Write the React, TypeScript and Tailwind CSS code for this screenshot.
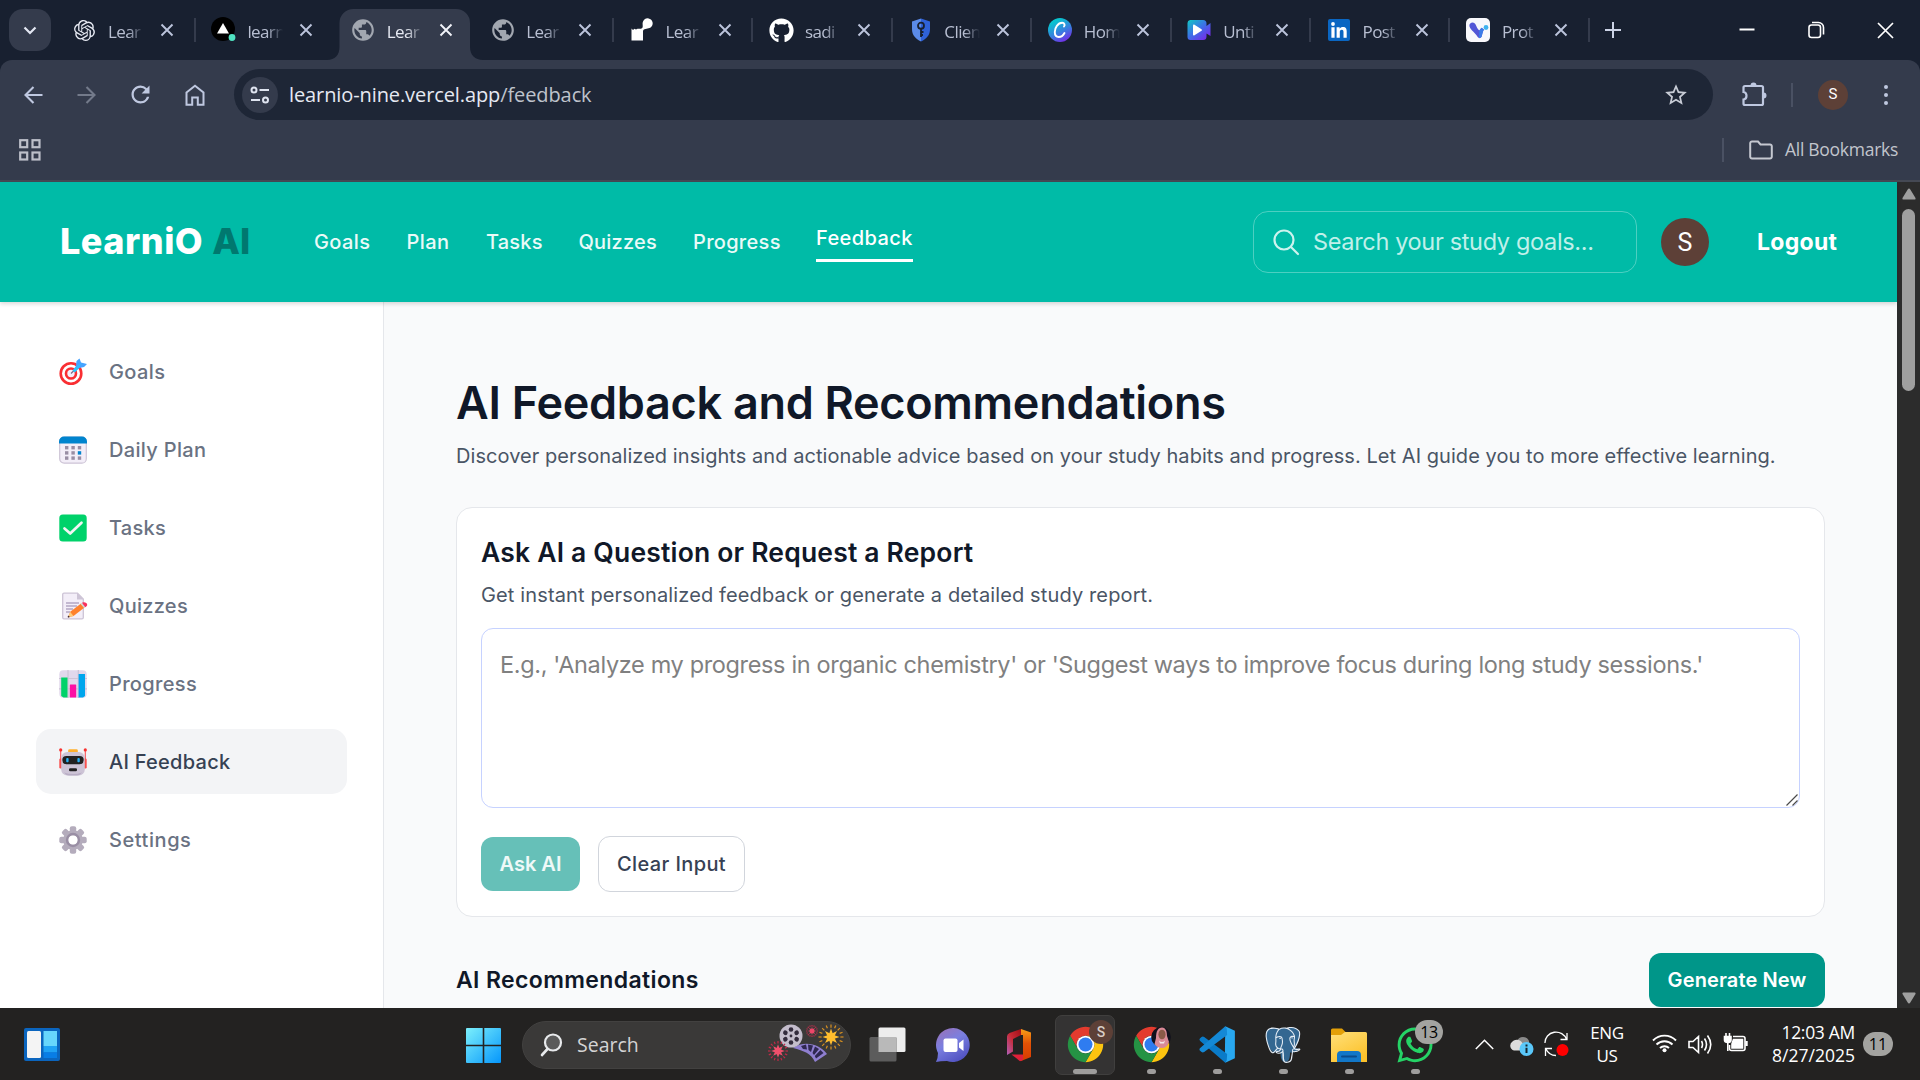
import React from 'react';
import { SiOpenai, SiPostgresql } from 'react-icons/si';
import { FaGithub, FaWhatsapp } from 'react-icons/fa';
import { MdPublic, MdStarBorder, MdRefresh } from 'react-icons/md';

const SYS = "font-['Open_Sans','Noto_Sans',sans-serif]";

/* ---------- Browser tab favicons ---------- */

const VercelIcon = () => (
  <svg width="26" height="26" viewBox="0 0 26 26">
    <circle cx="12" cy="12" r="12" fill="#000" />
    <path d="M12 6 18 16.500H6z" fill="#fff" />
    <circle cx="21" cy="20.500" r="3.400" fill="#50e3c2" />
  </svg>
);
const ResumeIcon = () => (
  <svg width="22" height="24" viewBox="0 0 22 24" fill="#fff">
    <path d="M0.500 10.500 2 12 3.500 10.800 5 11.600 6.500 10.800H10C13 10 11 6 11.800 4.200A5 5 0 1 1 18.500 10C16 11 12.500 10.500 12 13V22.500H0.500z" />
  </svg>
);
const ShieldIcon = () => (
  <svg width="20" height="24" viewBox="0 0 20 24">
    <path d="M10 0.500 19 3.500V11C19 17 15.500 21 10 23.500z" fill="#2f62d9" />
    <path d="M10 0.500 1 3.500V11C1 17 4.500 21 10 23.500z" fill="#5b8be8" />
    <circle cx="10" cy="7.700" r="3" fill="none" stroke="#182030" strokeWidth="1.800" />
    <path d="M10 10.500V19M10 14H12.500M10 17H12" stroke="#182030" strokeWidth="1.800" />
  </svg>
);
const CanvaIcon = () => (
  <svg width="24" height="24" viewBox="0 0 24 24">
    <defs>
      <linearGradient id="cv" x1="0.200" y1="0" x2="0.750" y2="1">
        <stop offset="0.150" stopColor="#08c3cf" />
        <stop offset="0.600" stopColor="#3a7be0" />
        <stop offset="1" stopColor="#7a25e8" />
      </linearGradient>
    </defs>
    <circle cx="12" cy="12" r="12" fill="url(#cv)" />
    <path d="M16 8.500C17.200 7 16.500 4.800 14.200 4.800 9.800 4.800 6.800 10 6.800 14 6.800 17 8.400 19 10.800 19 13.200 19 15.200 17.400 16.500 15" fill="none" stroke="#fff" strokeWidth="1.900" strokeLinecap="round" />
  </svg>
);
const ClipIcon = () => (
  <svg width="25" height="22" viewBox="0 0 25 22">
    <defs>
      <linearGradient id="cl" x1="0" y1="0" x2="0.900" y2="1">
        <stop offset="0" stopColor="#10c8c4" />
        <stop offset="0.500" stopColor="#3d6fe8" />
        <stop offset="1" stopColor="#8020ea" />
      </linearGradient>
    </defs>
    <path d="M3 1H16A3.500 3.500 0 0 1 19.500 4.500V7L23.500 4V17L19.500 14.500V17.500A3.500 3.500 0 0 1 16 21H3.500A3 3 0 0 1 0.500 18V4A3 3 0 0 1 3 1Z" fill="url(#cl)" />
    <path d="M6 6.300C6 5.500 6.800 5.300 7.500 5.700L14.500 10.200C15.200 10.700 15.200 11.300 14.500 11.800L7.500 16.300C6.800 16.700 6 16.500 6 15.700z" fill="#fff" />
  </svg>
);
const LinkedInIcon = () => (
  <svg width="22" height="22" viewBox="0 0 22 22">
    <rect width="22" height="22" rx="2" fill="#0a66c2" />
    <circle cx="5" cy="5" r="1.900" fill="#fff" />
    <path d="M3.400 8.200H6.600V18.700H3.400zM8.600 8.200H11.600V9.700C12.300 8.500 13.500 7.900 15 7.900 18 7.900 18.700 9.900 18.700 12.600V18.700H15.500V13.300C15.500 11.800 15.300 10.700 13.800 10.700 12.200 10.700 11.800 11.900 11.800 13.300V18.700H8.600z" fill="#fff" />
  </svg>
);
const VIcon = () => (
  <svg width="24" height="24" viewBox="0 0 24 24">
    <rect width="24" height="24" rx="5" fill="#f8f8fc" />
    <path d="M3.500 8.500A3.200 3.200 0 0 1 9.300 6C10.500 8.500 11.500 11 13.300 12.500L15.500 9.800 18 11.500C16.500 14 16.300 16.500 15.600 18.800Q13.500 21.500 11.500 18.800C9 14.500 5 12.500 3.500 8.500Z" fill="#5256d6" />
    <path d="M13.300 12.500 15.500 9.800 18 11.500C16.500 14 16.300 16.500 15.600 18.800Q14.500 20.500 13 20Z" fill="#3b7be8" />
    <circle cx="20" cy="9.500" r="2.400" fill="#3fb2ef" />
  </svg>
);

const tabs: { icon: React.ReactNode; text: string; active?: boolean; sep?: boolean }[] = [
  { icon: <SiOpenai size={21} color="#e6e9f2" />, text: 'Lear', sep: true },
  { icon: <VercelIcon />, text: 'learn' },
  { icon: <MdPublic size={26} color="#a2a7b0" />, text: 'Lear', active: true },
  { icon: <MdPublic size={26} color="#a2a7b0" />, text: 'Lear', sep: true },
  { icon: <ResumeIcon />, text: 'Lear', sep: true },
  { icon: <FaGithub size={25} color="#fff" />, text: 'sadi', sep: true },
  { icon: <ShieldIcon />, text: 'Clien', sep: true },
  { icon: <CanvaIcon />, text: 'Hom', sep: true },
  { icon: <ClipIcon />, text: 'Unti', sep: true },
  { icon: <LinkedInIcon />, text: 'Post', sep: true },
  { icon: <VIcon />, text: 'Prot', sep: true },
];

const TabClose = ({ color }: { color: string }) => (
  <svg width="14" height="14" viewBox="0 0 14 14" stroke={color} strokeWidth="1.900">
    <path d="M1.500 1.500 12.500 12.500M12.500 1.500 1.500 12.500" />
  </svg>
);

function TabStrip() {
  return (
    <div className={`flex h-[60px] shrink-0 bg-[#182030] ${SYS}`}>
      <div className="ml-[9px] mt-[9px] flex size-[42px] items-center justify-center rounded-[14px] bg-[#343b4c]">
        <svg width="14" height="9" viewBox="0 0 14 9" fill="none" stroke="#e3e7f2" strokeWidth="2.200">
          <path d="M1.500 1.500 7 7 12.500 1.500" />
        </svg>
      </div>
      <div className="ml-[5.500px] flex">
        {tabs.map((t, i) => (
          <div key={i} className="relative flex h-[60px] w-[139.400px] items-center">
            {t.active && (
              <svg className="absolute -left-[8px] top-[9px]" width="156" height="51" viewBox="0 0 156 51">
                <path d="M0 51C8 51 12.500 46 12.500 38V14A14 14 0 0 1 26.500 0H129A14 14 0 0 1 143 14V38C143 46 148 51 156 51Z" fill="#343b4c" />
              </svg>
            )}
            <div className="relative ml-[14px] flex w-[28px] justify-center">{t.icon}</div>
            <div
              className={`relative ml-[9.500px] w-[46px] whitespace-nowrap pt-[3px] text-[17px] leading-[24px] tracking-[-0.600px] [mask-image:linear-gradient(to_right,black_20px,transparent_36px)] ${t.active ? 'text-[#e6e9f2]' : 'text-[#b8bfd2]'}`}
            >
              {t.text}
            </div>
            <div className="relative ml-[6px]">
              <TabClose color={t.active ? '#f2f4fa' : '#bcc4dc'} />
            </div>
            {t.sep && <div className="ml-auto h-[24px] w-[2px] bg-[#343b4c]" />}
          </div>
        ))}
      </div>
      <svg className="ml-[15px] mt-[22px]" width="16" height="16" viewBox="0 0 16 16" stroke="#ccd3e6" strokeWidth="2">
        <path d="M8 0V16M0 8H16" />
      </svg>
      <div className="ml-auto mr-[26px] mt-[20px] flex h-[20px] items-center text-white">
        <svg width="16" height="16" viewBox="0 0 16 16" stroke="currentColor" strokeWidth="2"><path d="M0.500 7.500H15.500" /></svg>
        <svg className="ml-[53px]" width="17" height="18" viewBox="0 0 17 18" fill="none" stroke="currentColor" strokeWidth="1.600">
          <rect x="1" y="4" width="11.500" height="12.500" rx="2.500" />
          <path d="M4 1.500H10.500A5 5 0 0 1 15.500 6.500V13.500" />
        </svg>
        <svg className="ml-[52px]" width="17" height="17" viewBox="0 0 17 17" stroke="currentColor" strokeWidth="1.700"><path d="M1 1 16 16M16 1 1 16" /></svg>
      </div>
    </div>
  );
}

/* ---------- Toolbar and bookmarks ---------- */

function Toolbar() {
  return (
    <div className="bg-[#182030]">
      <div className={`flex h-[122px] flex-col rounded-t-[12px] border-b-2 border-[#454954] bg-[#343b4c] ${SYS}`}>
        <div className="mt-[9px] flex h-[51px] items-center">
          <svg className="ml-[24px]" width="19" height="18" viewBox="0 0 19 18" fill="none" stroke="#bfc8e0" strokeWidth="2.100">
            <path d="M18.500 9H2M9.500 1 1.500 9 9.500 17" />
          </svg>
          <svg className="ml-[34px]" width="19" height="18" viewBox="0 0 19 18" fill="none" stroke="#737a8a" strokeWidth="2.100">
            <path d="M0.500 9H17M9.500 1 17.500 9 9.500 17" />
          </svg>
          <MdRefresh className="ml-[31px]" size={27} color="#bfc8e0" />
          <svg className="ml-[31px]" width="20" height="22" viewBox="0 0 20 22" fill="none" stroke="#bfc8e0" strokeWidth="2">
            <path d="M1.500 8.500 10 1.800 18.500 8.500V20.800H12.800V13.500H7.200V20.800H1.500Z" />
          </svg>
          <div className="ml-[29px] flex h-[51px] w-[1479px] items-center rounded-full bg-[#1e2636] pl-[8px] pr-[24px]">
            <div className="flex size-[36px] items-center justify-center rounded-full bg-[#343b4c]">
              <svg width="20" height="18" viewBox="0 0 20 18" fill="none" stroke="#dfe4f0" strokeWidth="2">
                <circle cx="4" cy="4" r="2.500" />
                <path d="M9.500 4H19M1 14H10" />
                <circle cx="15.500" cy="14" r="2.500" />
              </svg>
            </div>
            <div className="ml-[11px] text-[20px] leading-[28px] tracking-[-0.100px] text-[#e6e9f2]">
              learnio-nine.vercel.app<span className="text-[#bfc3cc]">/feedback</span>
            </div>
            <MdStarBorder className="ml-auto" size={26} color="#c8ccd6" />
          </div>
          <svg className="ml-[28px]" width="26" height="26" viewBox="0 0 26 26" fill="none" stroke="#bfc8e0" strokeWidth="2.200">
            <path d="M4 4H20.500A1.500 1.500 0 0 1 22 5.500V21.500A1.500 1.500 0 0 1 20.500 23H4A1.500 1.500 0 0 1 2.500 21.500V17.500C6.500 17 6.500 10.500 2.500 10V5.500A1.500 1.500 0 0 1 4 4Z" />
            <path d="M9.500 3.500A3 3 0 0 1 15.500 3.500ZM22.500 10.500A3 3 0 0 1 22.500 16.500Z" fill="#bfc8e0" stroke="none" />
          </svg>
          <div className="ml-[24px] h-[24px] w-[2px] bg-[#4a5163]" />
          <div className="ml-[25px] flex size-[30px] items-center justify-center rounded-full bg-[#5d4037] font-['Roboto',sans-serif] text-[15px] text-white">S</div>
          <div className="ml-[36px] flex w-[4px] flex-col gap-[4px]">
            <div className="size-[4px] rounded-full bg-[#bfc8e0]" />
            <div className="size-[4px] rounded-full bg-[#bfc8e0]" />
            <div className="size-[4px] rounded-full bg-[#bfc8e0]" />
          </div>
        </div>
        <div className="flex h-[60px] items-center pl-[19px] pr-[22px]">
          <svg width="22" height="22" viewBox="0 0 22 22" fill="none" stroke="#bcbfc9" strokeWidth="2.200">
            <rect x="1.200" y="1.200" width="7" height="7" />
            <rect x="13.500" y="1.200" width="7" height="7" />
            <rect x="1.200" y="13.500" width="7" height="7" />
            <rect x="13.500" y="13.500" width="7" height="7" />
          </svg>
          <div className="ml-auto h-[24px] w-[2px] bg-[#4a5163]" />
          <svg className="ml-[25px]" width="24" height="20" viewBox="0 0 24 20" fill="none" stroke="#c5c8d0" strokeWidth="2">
            <path d="M3 1.500H9L11.500 4.500H21A1.800 1.800 0 0 1 22.800 6.300V16.700A1.800 1.800 0 0 1 21 18.500H3A1.800 1.800 0 0 1 1.200 16.700V3.300A1.800 1.800 0 0 1 3 1.500Z" />
          </svg>
          <div className="mb-[2px] ml-[12px] w-[113px] whitespace-nowrap text-[17.500px] leading-[24px] tracking-[-0.280px] text-[#c2c5cc]">All Bookmarks</div>
        </div>
      </div>
    </div>
  );
}

/* ---------- Sidebar icons ---------- */

const TargetIcon = () => (
  <svg width="28" height="28" viewBox="0 0 28 28">
    <circle cx="12" cy="15.500" r="10.300" fill="#fff" stroke="#f92f33" strokeWidth="2.600" />
    <circle cx="12" cy="15.500" r="5" fill="#f4effa" stroke="#f92f33" strokeWidth="2.600" />
    <path d="M12 15.500 18.500 9" stroke="#7a6d8a" strokeWidth="1.200" />
    <path d="M14 12 17 8 17.500 3 20.500 0.500 22 4.500 28 6 25 9 20.500 10 16 14Z" fill="#46a3ff" />
    <path d="M13.500 12.500 22.500 5 16 14.500Z" fill="#26c9fc" />
  </svg>
);
const CalendarIcon = () => (
  <svg width="28" height="28" viewBox="0 0 28 28">
    <rect x="0.700" y="1.200" width="26.600" height="26" rx="4.500" fill="#f3eef8" stroke="#cdc4d6" strokeWidth="1.200" />
    <path d="M0 7.500V5.500A5 5 0 0 1 5 0.500H23A5 5 0 0 1 28 5.500V7.500Z" fill="#0084ce" />
    <g fill="#998ea4">
      <rect x="6" y="10" width="3.400" height="3.400" /><rect x="12.400" y="10" width="3.400" height="3.400" /><rect x="18.800" y="10" width="3.400" height="3.400" />
      <rect x="6" y="15.200" width="3.400" height="3.400" /><rect x="12.400" y="15.200" width="3.400" height="3.400" />
      <rect x="6" y="20.400" width="3.400" height="3.400" /><rect x="12.400" y="20.400" width="3.400" height="3.400" /><rect x="18.800" y="20.400" width="3.400" height="3.400" />
    </g>
    <rect x="18.800" y="15.200" width="3.400" height="3.400" fill="#0084ce" />
  </svg>
);
const CheckIcon = () => (
  <svg width="28" height="28" viewBox="0 0 28 28">
    <rect x="0.300" y="0.500" width="27.400" height="27" rx="3.500" fill="#00d26a" />
    <path d="M5.500 14.500 11.200 19.500 22.500 8.800" fill="none" stroke="#f4f4f4" strokeWidth="2.700" strokeLinecap="round" strokeLinejoin="round" />
  </svg>
);
const MemoIcon = () => (
  <svg width="29" height="28" viewBox="0 0 29 28" className="-mr-px">
    <path d="M5 1.200H18.500L24.300 7V25.500A1.300 1.300 0 0 1 23 26.800H5A1.300 1.300 0 0 1 3.700 25.500V2.500A1.300 1.300 0 0 1 5 1.200Z" fill="#f3eef8" stroke="#cdc4d6" strokeWidth="1.300" />
    <path d="M18 1 24.500 7.500H18Z" fill="#cdc4d6" />
    <path d="M7 11H20M7 14H18M7 17H14M7 20H11" stroke="#b4a6c2" strokeWidth="1.300" />
    <path d="M11.500 19.500 22 11.500 25.500 15.500 14.500 24 9 25.200Z" fill="#ff822d" />
    <path d="M11.200 20 14.500 24 9 25.200Z" fill="#ffce7c" />
    <path d="M21.500 12 23 10.800 26.500 14.800 25 16Z" fill="#d3d3d3" />
    <path d="M23 10.800 24.500 10.300C27 10 29.500 12.500 27.500 14.200L26.300 15.200Z" fill="#f8315f" />
    <circle cx="9.600" cy="24.700" r="0.900" fill="#402a32" />
  </svg>
);
const ChartIcon = () => (
  <svg width="28" height="28" viewBox="0 0 28 28">
    <rect x="0.300" y="0.300" width="27.400" height="27.400" rx="4" fill="#e1d8ec" />
    <path d="M9 0V28M19.300 0V28M0 8.500H28M0 18.800H28" stroke="#cdc4d6" strokeWidth="1.200" />
    <path d="M2.200 7.500H8.500V27.500H4.500L2.200 26Z" fill="#00d26a" />
    <rect x="10.800" y="14.500" width="6.400" height="13" rx="0.600" fill="#fc0fa4" />
    <path d="M19.600 4H26V26L24 27.500H19.600Z" fill="#00a6ed" />
  </svg>
);
const RobotIcon = () => (
  <svg width="28" height="28" viewBox="0 0 28 28">
    <path d="M1.700 2V15M26.300 2V15" stroke="#f85057" strokeWidth="1.100" />
    <circle cx="1.700" cy="1.900" r="1.600" fill="#f8312f" /><circle cx="26.300" cy="1.900" r="1.600" fill="#f8312f" />
    <rect x="0.300" y="10.500" width="3" height="10" rx="1.200" fill="#f8514f" /><rect x="24.700" y="10.500" width="3" height="10" rx="1.200" fill="#f8514f" />
    <rect x="9.200" y="1.300" width="9.600" height="5" rx="1.300" fill="#ffb02e" />
    <rect x="2.200" y="4" width="23.600" height="23.500" rx="6" fill="#cdc4d6" />
    <path d="M5 24.500Q14 27.500 23 24.500Q21 27.500 18 27.500H10Q7 27.500 5 24.500Z" fill="#b8adc4" />
    <rect x="3.300" y="8" width="21.400" height="8.200" rx="4.100" fill="#212121" />
    <rect x="7.200" y="10" width="2.400" height="4.300" rx="1" fill="#26b0f5" /><rect x="18.400" y="10" width="2.400" height="4.300" rx="1" fill="#26b0f5" />
    <rect x="10" y="20.200" width="8" height="3" rx="1.300" fill="#212121" />
  </svg>
);
const GearIcon = () => (
  <svg width="28" height="28" viewBox="0 0 28 28">
    <g fill="#b4acbc">
      {[0, 45, 90, 135, 180, 225, 270, 315].map((a) => (
        <rect key={a} x="10.800" y="0.300" width="6.400" height="8" rx="2" transform={`rotate(${a} 14 14)`} />
      ))}
    </g>
    <circle cx="14" cy="14" r="7.300" fill="none" stroke="#b4acbc" strokeWidth="5" />
    <circle cx="14" cy="14" r="6" fill="none" stroke="#998ea4" strokeWidth="2.400" />
  </svg>
);

const sideItems = [
  { icon: <TargetIcon />, label: 'Goals', cls: 'tracking-[0.420px]' },
  { icon: <CalendarIcon />, label: 'Daily Plan', cls: 'tracking-[0.320px]' },
  { icon: <CheckIcon />, label: 'Tasks', cls: 'tracking-[0.250px]' },
  { icon: <MemoIcon />, label: 'Quizzes', cls: 'tracking-[0.280px]' },
  { icon: <ChartIcon />, label: 'Progress', cls: 'tracking-[0.340px]' },
  { icon: <RobotIcon />, label: 'AI Feedback', cls: 'tracking-[0.260px]', active: true },
  { icon: <GearIcon />, label: 'Settings', cls: 'tracking-[0.560px]' },
];

const navItems = [
  { label: 'Goals', cls: 'w-[57px] tracking-[0.420px]' },
  { label: 'Plan', cls: 'w-[44px] tracking-[0.400px]' },
  { label: 'Tasks', cls: 'w-[57px] tracking-[0.200px]' },
  { label: 'Quizzes', cls: 'w-[79px] tracking-[0.200px]' },
  { label: 'Progress', cls: 'w-[87.500px] tracking-[0.300px]' },
];

/* ---------- Page ---------- */

function Header() {
  return (
    <header className="relative z-10 flex h-[120px] shrink-0 items-center bg-[#00bba7] pl-[60px] pr-[60px] shadow-[0_2px_4px_rgba(0,0,0,0.15)]">
      <div className="mb-[2px] flex w-[193px] whitespace-nowrap text-[36px] font-extrabold leading-[40px]">
        <span className="tracking-[0.500px] text-white">LearniO</span>
        <span className="ml-[9px] tracking-[0.200px] text-[#00786f]">AI</span>
      </div>
      <nav className="ml-[61px] flex items-center gap-[35.500px] whitespace-nowrap text-[20px] font-medium leading-[30px] text-[#eafaf8]">
        {navItems.map((n) => (
          <a key={n.label} className={n.cls}>{n.label}</a>
        ))}
        <a className="w-[97px] border-b-[3px] border-white pb-[6px] tracking-[0.400px] text-white">Feedback</a>
      </nav>
      <div className="ml-auto flex h-[62px] w-[384px] items-center rounded-[15px] border border-white/30 pl-[19px]">
        <svg width="27" height="27" viewBox="0 0 27 27" fill="none" stroke="#cdf3ee" strokeWidth="2.200" strokeLinecap="round">
          <circle cx="11" cy="11" r="9.500" />
          <path d="M18 18 25 25" />
        </svg>
        <span className="ml-[13px] whitespace-nowrap text-[23.500px] leading-[36px] tracking-[-0.340px] text-[#c0f0ea]">Search your study goals...</span>
      </div>
      <div className="ml-[24px] flex size-[48px] items-center justify-center rounded-full bg-[#5d4037] pt-px font-['Roboto',sans-serif] text-[25px] text-white">S</div>
      <a className="ml-[48px] w-[80px] text-[23px] font-bold leading-[30px] tracking-[0.300px] text-white">Logout</a>
    </header>
  );
}

function Sidebar() {
  return (
    <aside className="flex w-[384px] shrink-0 flex-col gap-[13px] border-r border-[#e5e7eb] bg-white pl-[36px] pr-[36px] pt-[37px]">
      {sideItems.map((s) => (
        <div key={s.label} className={`flex h-[65px] shrink-0 items-center rounded-[15px] pl-[22.500px] ${s.active ? 'bg-[#f3f4f6]' : ''}`}>
          {s.icon}
          <span className={`ml-[22.500px] text-[20px] font-medium leading-[30px] ${s.cls} ${s.active ? 'text-[#364153]' : 'text-[#6a7282]'}`}>{s.label}</span>
        </div>
      ))}
    </aside>
  );
}

function Main() {
  return (
    <main className="flex min-w-0 flex-1 flex-col overflow-hidden bg-[#f9fafb] px-[72px] pt-[73px]">
      <h1 className="whitespace-nowrap text-[45px] font-semibold leading-[56px] tracking-[-0.290px] text-[#101828]">AI Feedback and Recommendations</h1>
      <p className="mt-[10px] whitespace-nowrap text-[20px] leading-[30px] tracking-[0.060px] text-[#4a5565]">
        Discover personalized insights and actionable advice based on your study habits and progress. Let AI guide you to more effective learning.
      </p>
      <section className="mt-[36px] flex h-[410px] shrink-0 flex-col rounded-[16px] border border-[#e5e7eb] bg-white px-[24px] pt-[24px]">
        <h2 className="mt-[2px] whitespace-nowrap text-[26.500px] font-semibold leading-[36px] tracking-[0.190px] text-[#101828]">Ask AI a Question or Request a Report</h2>
        <p className="mt-[10px] text-[20px] leading-[30px] tracking-[0.130px] text-[#4a5565]">Get instant personalized feedback or generate a detailed study report.</p>
        <div className="relative mt-[18px] h-[180px]">
          <textarea
            className="block size-full resize-none overflow-hidden rounded-[12px] border border-[#c6d2ff] px-[18px] py-[17px] text-[23.500px] leading-[38px] tracking-[-0.350px] outline-none placeholder:text-[#808080]"
            placeholder="E.g., 'Analyze my progress in organic chemistry' or 'Suggest ways to improve focus during long study sessions.'"
          />
          <svg className="absolute bottom-[2px] right-[2px]" width="12" height="12" viewBox="0 0 12 12" stroke="#4a4a4a" strokeWidth="1.200">
            <path d="M0.500 11.500 11.500 0.500M6.500 11.500 11.500 6.500" />
          </svg>
        </div>
        <div className="mt-[28px] flex items-center gap-[18px]">
          <button className="h-[54px] w-[99px] rounded-[12px] bg-[#66c0b8] text-[20px] font-semibold text-white/90">Ask AI</button>
          <button className="h-[56px] w-[147px] rounded-[12px] border border-[#d1d5dc] text-[20px] font-medium tracking-[0.390px] text-[#364153]">Clear Input</button>
        </div>
      </section>
      <div className="mt-[36px] flex items-center justify-between">
        <h2 className="text-[23px] font-semibold leading-[36px] tracking-[0.370px] text-[#101828]">AI Recommendations</h2>
        <button className="h-[54px] w-[176px] rounded-[12px] bg-[#009689] text-[20px] font-semibold tracking-[0.120px] text-white">Generate New</button>
      </div>
    </main>
  );
}

function Scrollbar() {
  return (
    <div className="flex w-[23px] shrink-0 flex-col items-center bg-[#2c2c2c]">
      <svg className="mt-[6px]" width="14" height="12" viewBox="0 0 14 12" fill="#9f9f9f"><path d="M7 0.500Q7.800 0.500 8.300 1.500L13.500 10Q14 11.500 12.800 11.500H1.200Q0 11.500 0.500 10L5.700 1.500Q6.200 0.500 7 0.500Z" /></svg>
      <div className="mt-[9px] h-[182px] w-[13px] rounded-full bg-[#9f9f9f]" />
      <svg className="mb-[4px] mt-auto" width="14" height="12" viewBox="0 0 14 12" fill="#9f9f9f"><path d="M7 11.500Q6.200 11.500 5.700 10.500L0.500 2Q0 0.500 1.200 0.500H12.800Q14 0.500 13.500 2L8.300 10.500Q7.800 11.500 7 11.500Z" /></svg>
    </div>
  );
}

/* ---------- Taskbar ---------- */

const ChromeIcon = () => (
  <svg width="37" height="37" viewBox="1 1 46 46">
    <path d="M4.950 13A22 22 0 0 1 43.050 13L24 13A11 11 0 0 0 14.470 29.500Z" fill="#e33b2e" />
    <path d="M43.050 13A22 22 0 0 1 24 46L33.530 29.500A11 11 0 0 0 24 13Z" fill="#fcc40f" />
    <path d="M24 46A22 22 0 0 1 4.950 13L14.470 29.500A11 11 0 0 0 33.530 29.500Z" fill="#259344" />
    <circle cx="24" cy="24" r="11" fill="#fff" />
    <circle cx="24" cy="24" r="8.700" fill="#2f7cf0" />
  </svg>
);
const Burst = ({ x, y, r, c, o }: { x: number; y: number; r: number; c: string; o: string }) => (
  <g transform={`translate(${x} ${y})`}>
    {Array.from({ length: 16 }, (_, i) => (
      <path key={i} d={`M0 ${-r * 0.75}V${-r}`} stroke={o} strokeWidth="1.200" transform={`rotate(${i * 22.5})`} />
    ))}
    {Array.from({ length: 8 }, (_, i) => (
      <path key={i} d={`M${-r * 0.24} 0L0 ${-r * 0.68}L${r * 0.24} 0Z`} fill={c} transform={`rotate(${i * 45})`} />
    ))}
  </g>
);
const FilmArt = () => (
  <svg width="78" height="40" viewBox="0 0 78 40">
    <Burst x={44} y={7} r={6} c="#f0476a" o="#b0304a" />
    <path d="M25 24C36 16 52 20 59 30L47 38C43 29 36 27 25 24Z" fill="#8f7fd0" />
    <path d="M33 22 38 20.500 39 25.500 35 25ZM40 20.500 45 21.500 43 28 40.500 26ZM47 22.500 51 25 46 31 44.500 29ZM52.500 26 55.500 29 48 34.500 46.800 32Z" fill="#2f2850" />
    <circle cx="23" cy="12" r="11.500" fill="#c4bdcc" />
    <g fill="#332b3d">
      {[0, 60, 120, 180, 240, 300].map((a) => <circle key={a} cx="23" cy="5.500" r="2.300" transform={`rotate(${a} 23 12)`} />)}
      <circle cx="23" cy="12" r="1.400" />
    </g>
    <Burst x={10} y={27} r={10} c="#f0506c" o="#c02a48" />
    <Burst x={63} y={13} r={12.500} c="#ffbd2e" o="#d89020" />
  </svg>
);

const taskCells: { icon: React.ReactNode; dot?: boolean; active?: boolean; badge?: React.ReactNode }[] = [
  {
    icon: (
      <svg width="37" height="35" viewBox="0 0 37 35">
        <rect x="9.500" y="0.500" width="27" height="24.500" rx="1.500" fill="#ededed" />
        <rect x="0.500" y="10" width="27" height="24.500" rx="1.500" fill="#5c5c5c" />
        <rect x="9.500" y="10" width="18" height="15" fill="#b9b9b9" />
      </svg>
    ),
  },
  {
    icon: (
      <svg width="36" height="36" viewBox="0 0 36 36">
        <defs><linearGradient id="ch" x1="0.100" y1="0" x2="0.700" y2="1"><stop offset="0" stopColor="#9a72b8" /><stop offset="0.450" stopColor="#7a7fe0" /><stop offset="1" stopColor="#4f50c0" /></linearGradient></defs>
        <path d="M18.500 1A17 17 0 1 1 12 34Q5 34 1 35Q3 31 3 26A17 17 0 0 1 18.500 1Z" fill="url(#ch)" />
        <rect x="8.500" y="11.500" width="14" height="13.500" rx="2" fill="#fff" />
        <path d="M24 16 28.500 12.500V24L24 20.500Z" fill="#fff" />
      </svg>
    ),
  },
  {
    icon: (
      <svg width="26" height="34" viewBox="0 0 26 34">
        <defs>
          <linearGradient id="of" x1="0" y1="0" x2="0" y2="1"><stop offset="0" stopColor="#f8a018" /><stop offset="0.450" stopColor="#e35205" /><stop offset="1" stopColor="#d83b01" /></linearGradient>
          <linearGradient id="og" x1="1" y1="0" x2="0" y2="1"><stop offset="0" stopColor="#a00f16" /><stop offset="0.500" stopColor="#c92a35" /><stop offset="1" stopColor="#b060b8" /></linearGradient>
        </defs>
        <path d="M15 1 25 4.500V29L15 33V27H17V7H15Z" fill="url(#of)" />
        <path d="M15 1V7L7 11V23.500L1 27V8.500Q1 6 3.500 5Z" fill="url(#og)" />
        <path d="M5.500 26.500H17V32L14 33.200Z" fill="#e0203a" />
      </svg>
    ),
  },
  {
    icon: <ChromeIcon />, active: true, dot: true,
    badge: <div className="absolute right-[5px] top-[12px] flex size-[24px] items-center justify-center rounded-full bg-[#5d4037] font-['Roboto',sans-serif] text-[14px] font-medium text-[#d8ccc6]">S</div>,
  },
  {
    icon: <ChromeIcon />, dot: true,
    badge: (
      <svg className="absolute right-[13px] top-[19px]" width="20" height="22" viewBox="0 0 20 22">
        <ellipse cx="10" cy="10" rx="9.800" ry="10" fill="#10101c" />
        <path d="M5 11C5 4 7 0.500 11 0.500 15 0.500 16 5 16 9L18 15Q16 21 11 21 6 21 3.500 17Z" fill="#d98a96" />
        <ellipse cx="11" cy="7.500" rx="3.600" ry="4.800" fill="#8a5a48" />
        <path d="M8 13.500Q11 16.500 14 13.500L13 16.500H9Z" fill="#f2e8e8" />
      </svg>
    ),
  },
  {
    icon: (
      <svg width="37" height="37" viewBox="0 0 100 100">
        <path d="M71 1 97 13V87L71 99 70 72Z" fill="#28a8f0" />
        <path d="M71 99 4 41Q-1 37 3 33L7 29.500Q10 27 14 29.500L76 76 75 93Z" fill="#0a7bc8" />
        <path d="M71 1 4 59Q-1 63 3 67L7 70.500Q10 73 14 70.500L76 24 75 7Z" fill="#1489d6" />
      </svg>
    ), dot: true,
  },
  {
    icon: (
      <div className="relative size-[36px]">
        <svg className="absolute left-0 top-0" width="36" height="36" viewBox="0 0 36 36" fill="#336791">
          <path d="M3 2.500C7 0 11 1.500 13 2 17 0.500 21 1 23 1.500 28 0 33 1 34.500 5 35.500 10 33 17 30 21L34 22C32 25 28 25.500 25 25.500 25 30 24.500 35 20 35 16 35 15.500 29 15.500 24.500 13 26 10 25 8 25 4 22 1 14 1 8 1 5 1.500 3.500 3 2.500Z" />
        </svg>
        <SiPostgresql size={36} color="#e4ecf4" className="relative" />
      </div>
    ), dot: true,
  },
  {
    icon: (
      <svg width="38" height="38" viewBox="0 0 38 38">
        <defs><linearGradient id="fo" x1="0" y1="0" x2="0.600" y2="1"><stop offset="0" stopColor="#ffe07a" /><stop offset="1" stopColor="#fcc22c" /></linearGradient></defs>
        <path d="M1 4Q1 2.500 2.500 2.500H12L16 6.500H26V14H1Z" fill="#e3a008" />
        <path d="M1 9H11L15 6H35.500Q37 6 37 7.500V36H1Z" fill="url(#fo)" />
        <path d="M7 36V29Q7 25 11 25H27Q31 25 31 29V36Z" fill="#1277c8" />
        <path d="M12 30.500H26" stroke="#0b4c8c" strokeWidth="2" strokeLinecap="round" />
      </svg>
    ), dot: true,
  },
  {
    icon: <FaWhatsapp size={40} color="#25d366" />, dot: true,
    badge: <div className="absolute right-[5px] top-[12px] flex h-[24px] w-[28px] items-center justify-center rounded-full bg-[#a3a3a0] text-[16px] tracking-[-0.300px] text-black">13</div>,
  },
];

function Taskbar() {
  return (
    <footer className={`flex h-[72px] shrink-0 items-center bg-[#232221] text-white ${SYS}`}>
      <svg className="ml-[24px]" width="36" height="33" viewBox="0 0 36 33">
        <rect width="36" height="33" rx="2" fill="#0b65be" />
        <rect x="3" y="3" width="14" height="27" rx="1.500" fill="#f4f4f4" />
        <path d="M19.500 3H33V18H19.500Z" fill="#67d6fc" />
        <rect x="19.500" y="18" width="13.500" height="6.500" fill="#1fa2f5" />
        <rect x="19.500" y="24.500" width="13.500" height="5.500" fill="#087de6" />
      </svg>
      <svg className="ml-[406px] mt-[2px]" width="35" height="35" viewBox="0 0 35 35">
        <defs><linearGradient id="wn" x1="0" y1="0" x2="1" y2="1"><stop offset="0" stopColor="#7cf0fc" /><stop offset="1" stopColor="#0596fb" /></linearGradient></defs>
        <path d="M0 1Q0 0 1 0H16.700V16.700H0ZM18.300 0H34Q35 0 35 1V16.700H18.300ZM0 18.300H16.700V35H1Q0 35 0 34ZM18.300 18.300H35V34Q35 35 34 35H18.300Z" fill="url(#wn)" />
      </svg>
      <div className="ml-[21px] mt-[2px] flex h-[48px] w-[329px] items-center rounded-full border border-[#424140] bg-[#3a3938] pl-[17px]">
        <svg width="23" height="24" viewBox="0 0 23 24" fill="none">
          <circle cx="13" cy="9.500" r="8" fill="#5a5a5a" stroke="#e8eaec" strokeWidth="2.200" />
          <path d="M7.500 16 2 22" stroke="#e8eaec" strokeWidth="2.600" strokeLinecap="round" />
        </svg>
        <span className="ml-[14px] w-[62px] text-[19.500px] leading-[28px] tracking-[0px] text-[#d4d4d4]">Search</span>
        <div className="mb-[2px] ml-[129px]"><FilmArt /></div>
      </div>
      <div className="ml-[3px] flex">
        {taskCells.map((c, i) => (
          <div key={i} className="relative flex h-[72px] w-[66px] items-center justify-center">
            {c.active && <div className="absolute left-[3px] top-[7px] h-[60px] w-[60px] rounded-[7px] border border-[#403f3e] bg-[#343333]" />}
            <div className="relative mt-[1px]">{c.icon}</div>
            {c.badge}
            {c.dot && <div className={`absolute bottom-[6px] h-[5px] rounded-full bg-[#9e9d9c] ${c.active ? 'w-[24px]' : 'w-[9px]'}`} />}
          </div>
        ))}
      </div>
      <svg className="ml-[27px]" width="19" height="11" viewBox="0 0 19 11" fill="none" stroke="#fff" strokeWidth="1.500"><path d="M0.800 10 9.500 1.300 18.200 10" /></svg>
      <svg className="ml-[15px] mt-[4px]" width="25" height="22" viewBox="0 0 25 22">
        <path d="M8 6A6.500 6.500 0 0 1 20 6L20 12H8Z" fill="#8a8a8a" />
        <path d="M5 15.500A5 5 0 0 1 3.500 6.500 6.500 6.500 0 0 1 14 9L13 15.500Z" fill="#dcdcdc" />
        <circle cx="17.500" cy="14" r="7" fill="#5ac8fa" />
        <path d="M17.500 9.500V11.500M17.500 12.800V18" stroke="#14242e" strokeWidth="2" />
      </svg>
      <svg className="ml-[10px]" width="25" height="26" viewBox="0 0 25 26" fill="none" stroke="#fff" strokeWidth="1.300">
        <path d="M1 12A11 10.500 0 0 1 22.500 8.500M23 2V8.500H16.500M1.500 25V17.500H8M2 18A11 11 0 0 0 12 24.500" />
        <circle cx="18.500" cy="19" r="6" fill="#fe0000" stroke="none" />
      </svg>
      <div className="ml-[18px] w-[40px] text-center text-[17px] leading-[23px] tracking-[-0.300px]">
        <div>ENG</div>
        <div>US</div>
      </div>
      <svg className="ml-[25px] -mt-[2px]" width="25" height="19" viewBox="0 0 25 19" fill="none" stroke="#fff" strokeWidth="1.900">
        <path d="M1 6.500A16 16 0 0 1 24 6.500M4.500 10.500A11.500 11.500 0 0 1 20.500 10.500M8 14A6.500 6.500 0 0 1 17 14" />
        <circle cx="12.500" cy="16.200" r="2" fill="#fff" stroke="none" />
      </svg>
      <svg className="ml-[11px]" width="25" height="21" viewBox="0 0 25 21" fill="none" stroke="#fff" strokeWidth="1.600">
        <path d="M1 7.500H5L10.500 2.500V18.500L5 13.500H1ZM13.500 7Q15.500 10.500 13.500 14M16.500 4.500Q20.500 10.500 16.500 16.500M19.500 1.500Q26 10.500 19.500 19.500" />
      </svg>
      <svg className="ml-[10px] -mt-[4px]" width="26" height="21" viewBox="0 0 26 21" fill="none" stroke="#fff" strokeWidth="1.600">
        <path d="M10 4.500H20A2 2 0 0 1 22 6.500V16.500A2 2 0 0 1 20 18.500H8.500A2 2 0 0 1 6.500 16.500V13" />
        <path d="M10.500 7.500H19.500V16H9V12Z" fill="#fff" />
        <path d="M23.500 9V14" strokeWidth="2.400" />
        <path d="M1.500 4.500H8V8Q8 10.500 4.800 10.500 1.500 10.500 1.500 8Z" fill="#fff" />
        <path d="M3 4.500V1M6.500 4.500V1M4.800 10V19" />
      </svg>
      <div className="ml-auto w-[100px] whitespace-nowrap text-right text-[17.500px] leading-[23px] tracking-[0px]">
        <div className="tracking-[-0.300px]">12:03 AM</div>
        <div>8/27/2025</div>
      </div>
      <div className="ml-[8px] mr-[27px] flex h-[24px] w-[30px] items-center justify-center rounded-full bg-[#a3a3a0] text-[16px] text-black">11</div>
    </footer>
  );
}

export default function App() {
  return (
    <div className="flex h-[1080px] w-[1920px] flex-col overflow-hidden font-['Inter',sans-serif]">
      <TabStrip />
      <Toolbar />
      <div className="flex h-[826px] shrink-0">
        <div className="flex min-w-0 flex-1 flex-col">
          <Header />
          <div className="flex min-h-0 flex-1">
            <Sidebar />
            <Main />
          </div>
        </div>
        <Scrollbar />
      </div>
      <Taskbar />
    </div>
  );
}
